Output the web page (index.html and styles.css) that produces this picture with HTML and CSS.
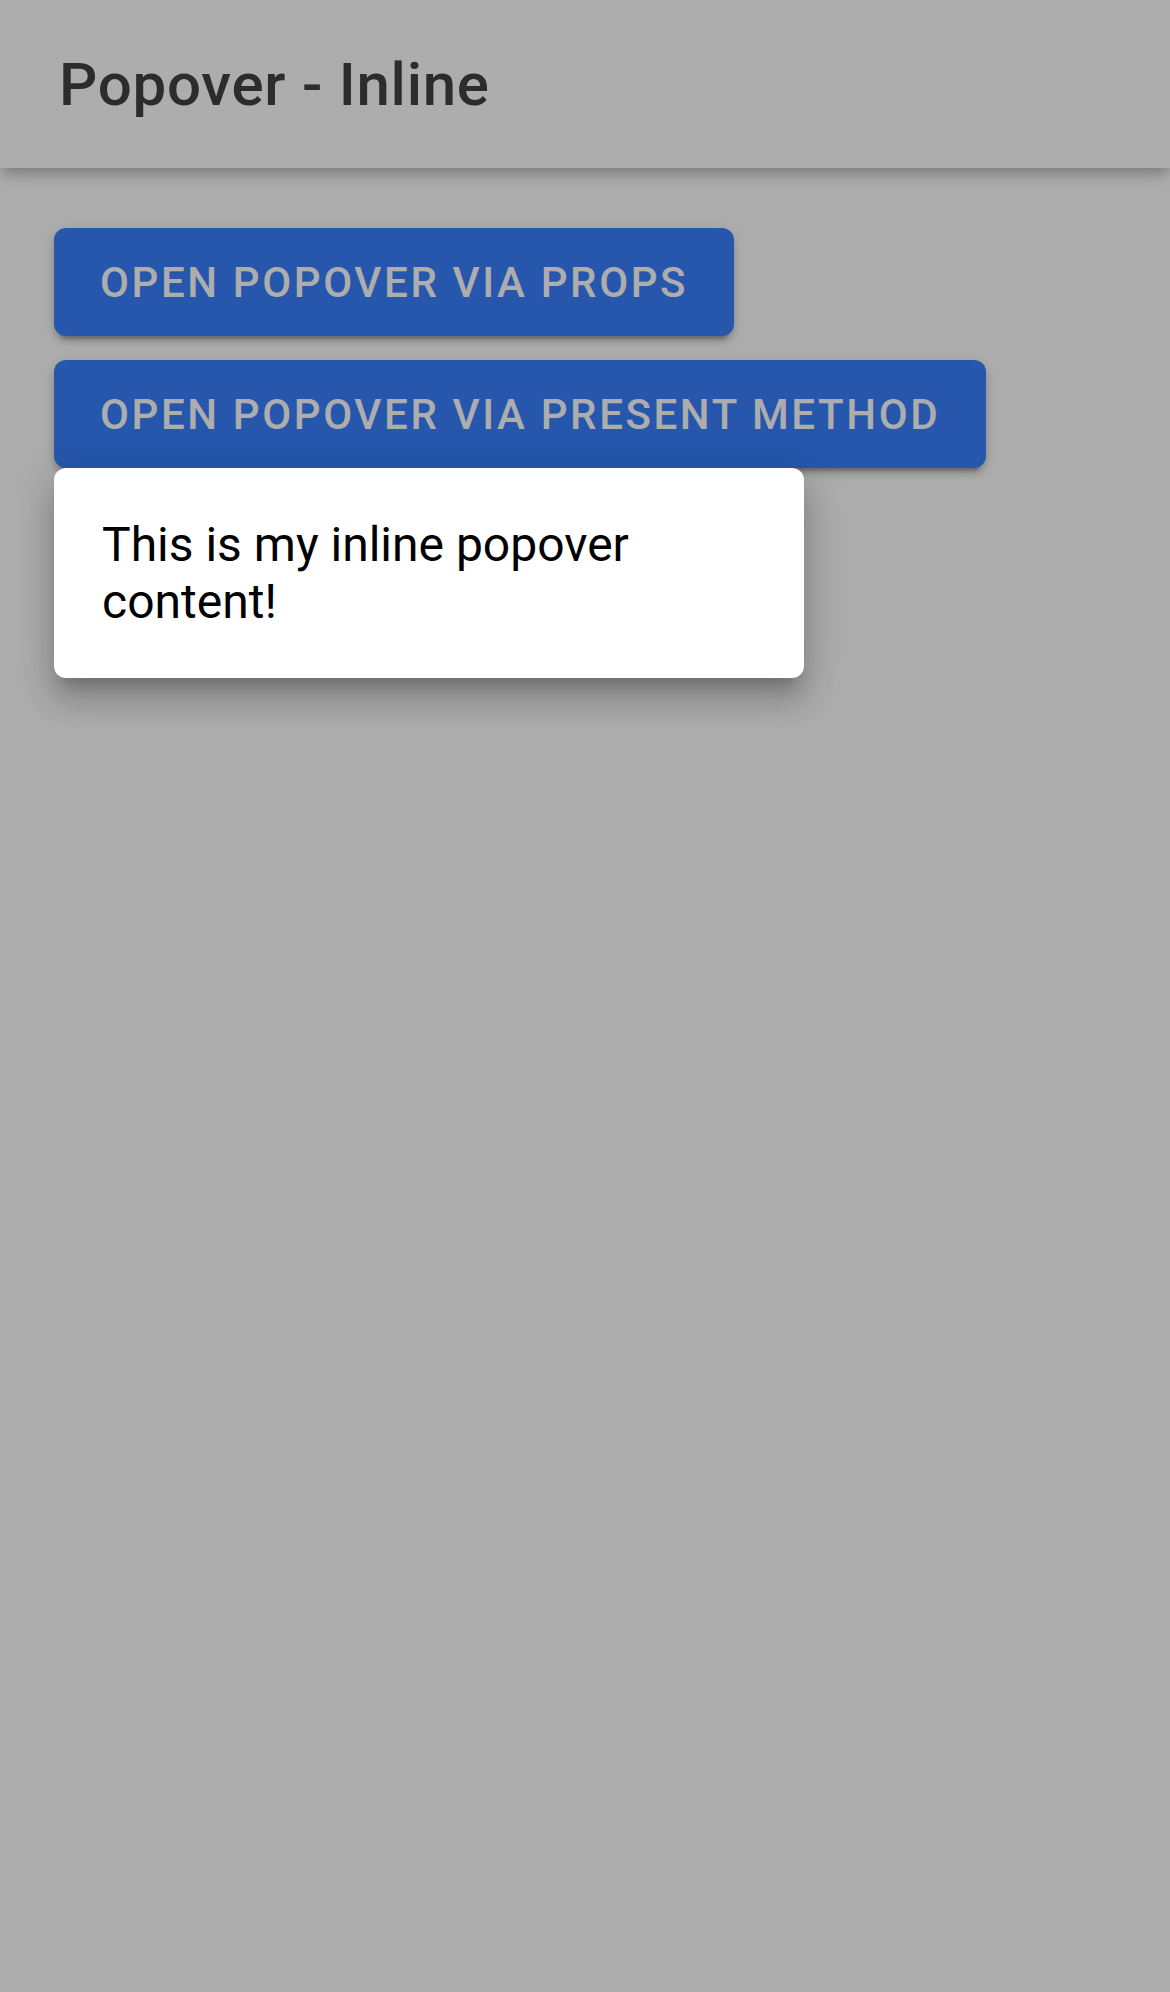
FILE: index.html
```html
<!DOCTYPE html>
<html lang="en">
<head>
<meta charset="utf-8">
<title>Popover - Inline</title>
<link rel="stylesheet" href="styles.css">
</head>
<body>
<div class="app">
  <header class="toolbar">
    <h1 class="title">Popover - Inline</h1>
  </header>
  <main class="content">
    <button class="btn" type="button">Open Popover via Props</button>
    <button class="btn" type="button">Open Popover via Present Method</button>
  </main>
</div>
<div class="backdrop"></div>
<div class="popover">
  <p class="popover-text">This is my inline popover content!</p>
</div>
</body>
</html>
```
FILE: styles.css
```css
html, body {
  margin: 0;
  padding: 0;
}
body {
  width: 1170px;
  height: 1992px;
  background: #ffffff;
  font-family: Roboto, "Noto Sans", "Liberation Sans", sans-serif;
  overflow: hidden;
  position: relative;
}
.app {
  display: flex;
  flex-direction: column;
  height: 1992px;
}
.toolbar {
  height: 168px;
  flex: 0 0 168px;
  background: #ffffff;
  display: flex;
  align-items: center;
  padding: 0 0 0 59px;
  box-sizing: border-box;
  position: relative;
  z-index: 1;
  box-shadow: 0 6px 12px -3px rgba(0,0,0,0.16), 0 9px 12px 0 rgba(0,0,0,0.1), 0 3px 24px 0 rgba(0,0,0,0.08);
}
.title {
  margin: 0;
  font-size: 60px;
  font-weight: 500;
  letter-spacing: 0.75px;
  color: #424242;
  line-height: normal;
}
.content {
  display: flex;
  flex-direction: column;
  align-items: flex-start;
  padding: 48px 48px;
}
.btn {
  margin: 12px 6px;
  height: 108px;
  padding: 0 46px;
  border: none;
  border-radius: 12px;
  background: #3880ff;
  color: #ffffff;
  font-family: Roboto, "Noto Sans", "Liberation Sans", sans-serif;
  font-size: 42px;
  font-weight: 500;
  letter-spacing: 2.62px;
  text-transform: uppercase;
  box-shadow: 0 9px 3px -6px rgba(0,0,0,0.2), 0 6px 6px 0 rgba(0,0,0,0.14), 0 3px 15px 0 rgba(0,0,0,0.12);
}
.backdrop {
  position: absolute;
  inset: 0;
  background: rgba(0,0,0,0.32);
  z-index: 5;
}
.popover {
  position: absolute;
  left: 54px;
  top: 468px;
  width: 750px;
  box-sizing: border-box;
  padding: 48px;
  background: #ffffff;
  border-radius: 12px;
  z-index: 10;
  box-shadow: 0 15px 15px -9px rgba(0,0,0,0.2), 0 24px 30px 3px rgba(0,0,0,0.14), 0 9px 42px 6px rgba(0,0,0,0.12);
}
.popover-text {
  margin: 0;
  font-size: 48px;
  font-weight: 400;
  color: #000000;
  line-height: normal;
}
```
